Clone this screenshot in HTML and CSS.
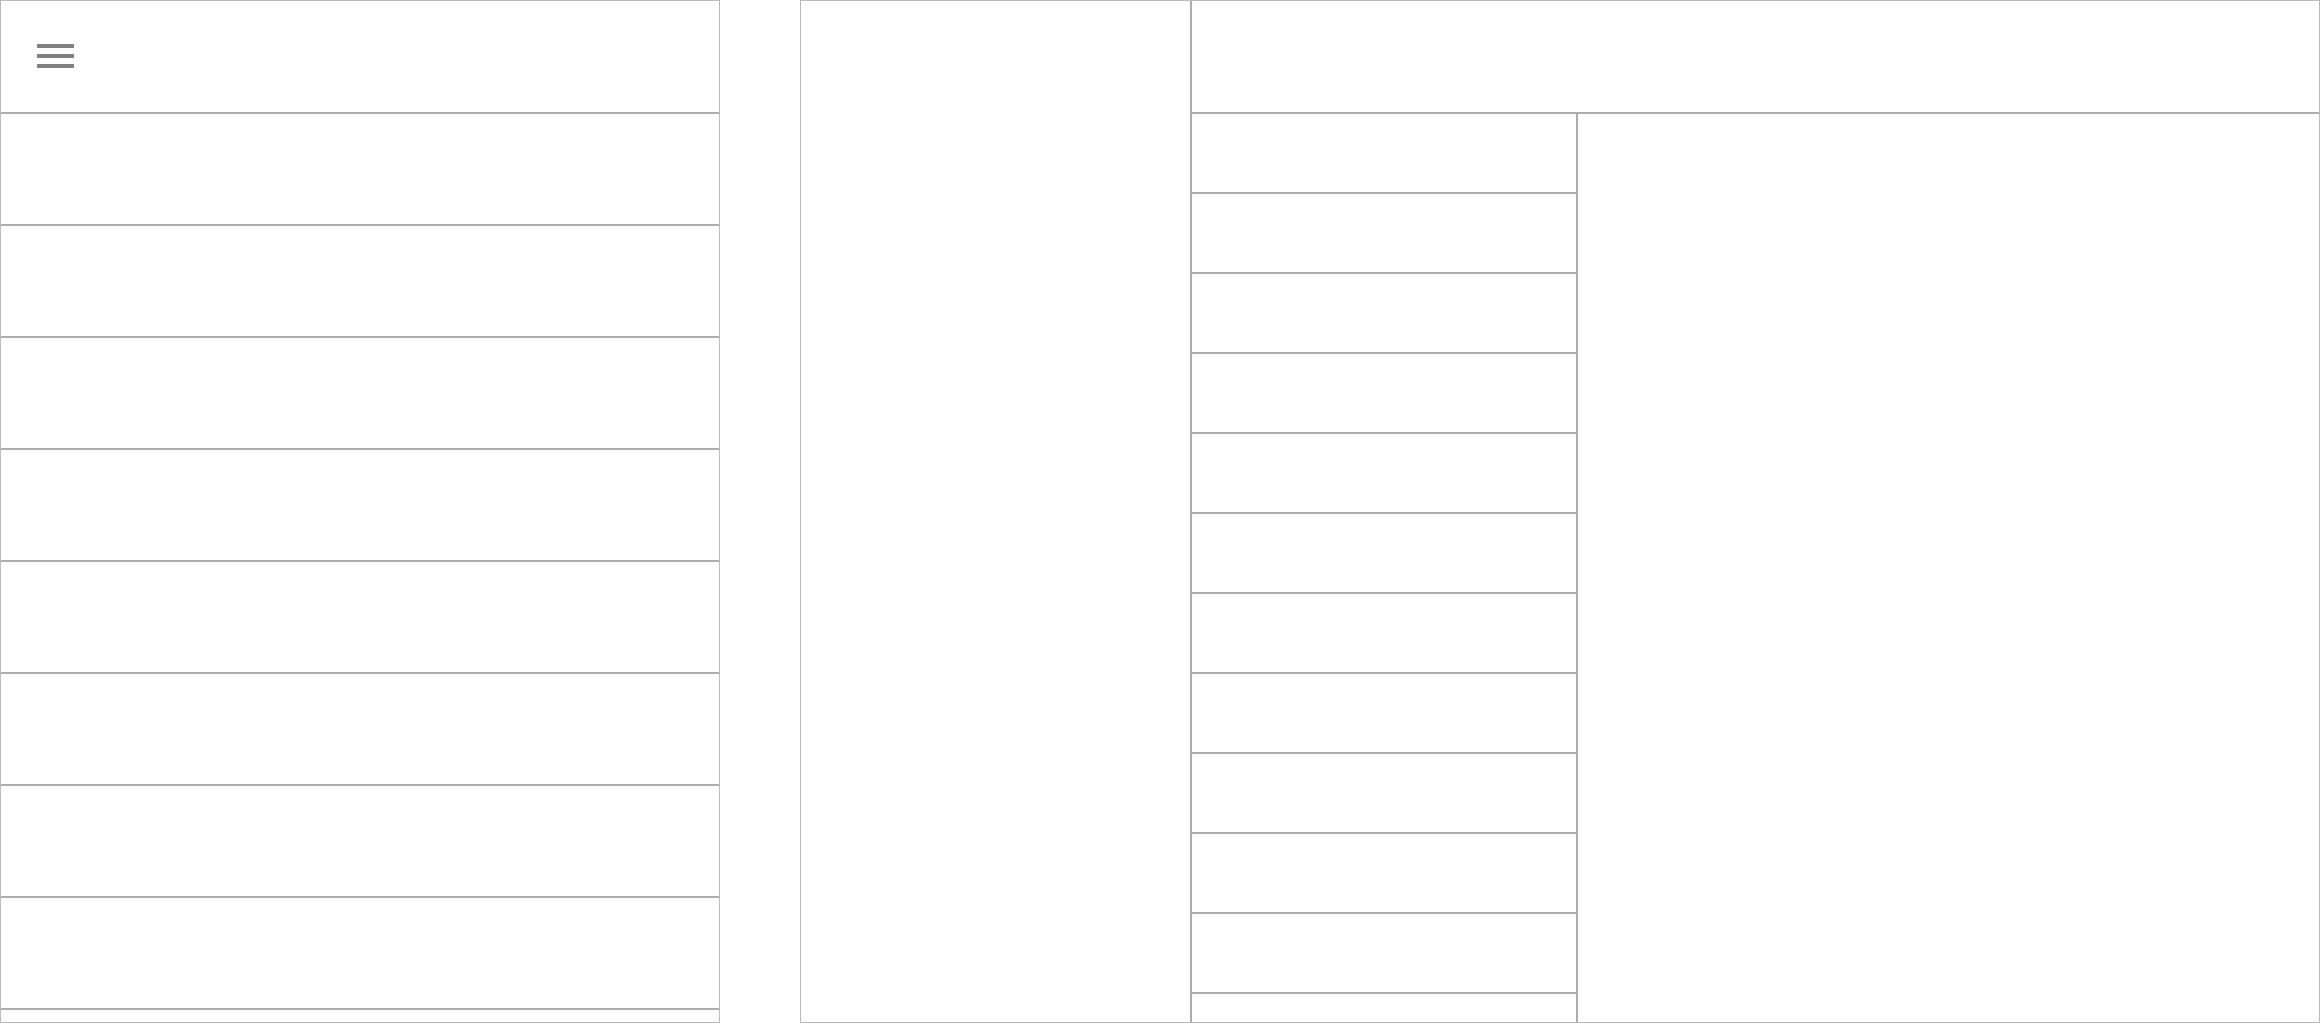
FILE: index.html
```html
<!DOCTYPE html>
<html lang="en">
<head>
<meta charset="utf-8">
<title>Wireframe</title>
<link rel="stylesheet" href="styles.css">
</head>
<body>
<div class="page">
  <section class="panel mobile">
    <header class="mobile-header">
      <button class="menu-btn" aria-label="Menu">
        <span class="bar"></span><span class="bar"></span><span class="bar"></span>
      </button>
    </header>
    <div class="mobile-row"></div>
    <div class="mobile-row"></div>
    <div class="mobile-row"></div>
    <div class="mobile-row"></div>
    <div class="mobile-row"></div>
    <div class="mobile-row"></div>
    <div class="mobile-row"></div>
    <div class="mobile-row"></div>
    <div class="mobile-row"></div>
  </section>
  <section class="panel desktop">
    <aside class="sidebar"></aside>
    <div class="main">
      <header class="main-header"></header>
      <div class="main-body">
        <div class="list">
          <div class="list-row"></div>
          <div class="list-row"></div>
          <div class="list-row"></div>
          <div class="list-row"></div>
          <div class="list-row"></div>
          <div class="list-row"></div>
          <div class="list-row"></div>
          <div class="list-row"></div>
          <div class="list-row"></div>
          <div class="list-row"></div>
          <div class="list-row"></div>
          <div class="list-row"></div>
        </div>
        <div class="detail"></div>
      </div>
    </div>
  </section>
</div>
</body>
</html>
```

FILE: styles.css
```css
html, body {
  margin: 0;
  padding: 0;
  background: #ffffff;
  font-family: "Liberation Sans", Arial, sans-serif;
}

.page {
  display: flex;
  gap: 80px;
  width: 2320px;
  height: 1024px;
  overflow: hidden;
}

.panel {
  box-sizing: border-box;
  height: 1023px;
  border: 1px solid #bababa;
  overflow: hidden;
  background: #ffffff;
}

.mobile {
  width: 720px;
  flex: none;
  display: flex;
  flex-direction: column;
}

.mobile-header {
  flex: none;
  height: 111px;
  border-bottom: 2px solid #adadad;
  display: flex;
  align-items: center;
  padding-left: 36px;
}

.menu-btn {
  border: 0;
  background: none;
  padding: 0;
  width: 37px;
  height: 24px;
  display: flex;
  flex-direction: column;
  justify-content: space-between;
  margin-top: -1px;
}

.bar {
  display: block;
  width: 37px;
  height: 4px;
  background: #808080;
}

.mobile-row {
  flex: none;
  height: 110px;
  border-bottom: 2px solid #adadad;
}

.desktop {
  width: 1520px;
  flex: none;
  display: flex;
}

.sidebar {
  flex: none;
  width: 389px;
  border-right: 2px solid #adadad;
}

.main {
  flex: 1;
  display: flex;
  flex-direction: column;
  min-width: 0;
}

.main-header {
  flex: none;
  height: 111px;
  border-bottom: 2px solid #adadad;
}

.main-body {
  flex: 1;
  display: flex;
  min-height: 0;
}

.list {
  flex: none;
  width: 384px;
  border-right: 2px solid #adadad;
  display: flex;
  flex-direction: column;
}

.list-row {
  flex: none;
  height: 78px;
  border-bottom: 2px solid #adadad;
}

.detail {
  flex: 1;
}
```
